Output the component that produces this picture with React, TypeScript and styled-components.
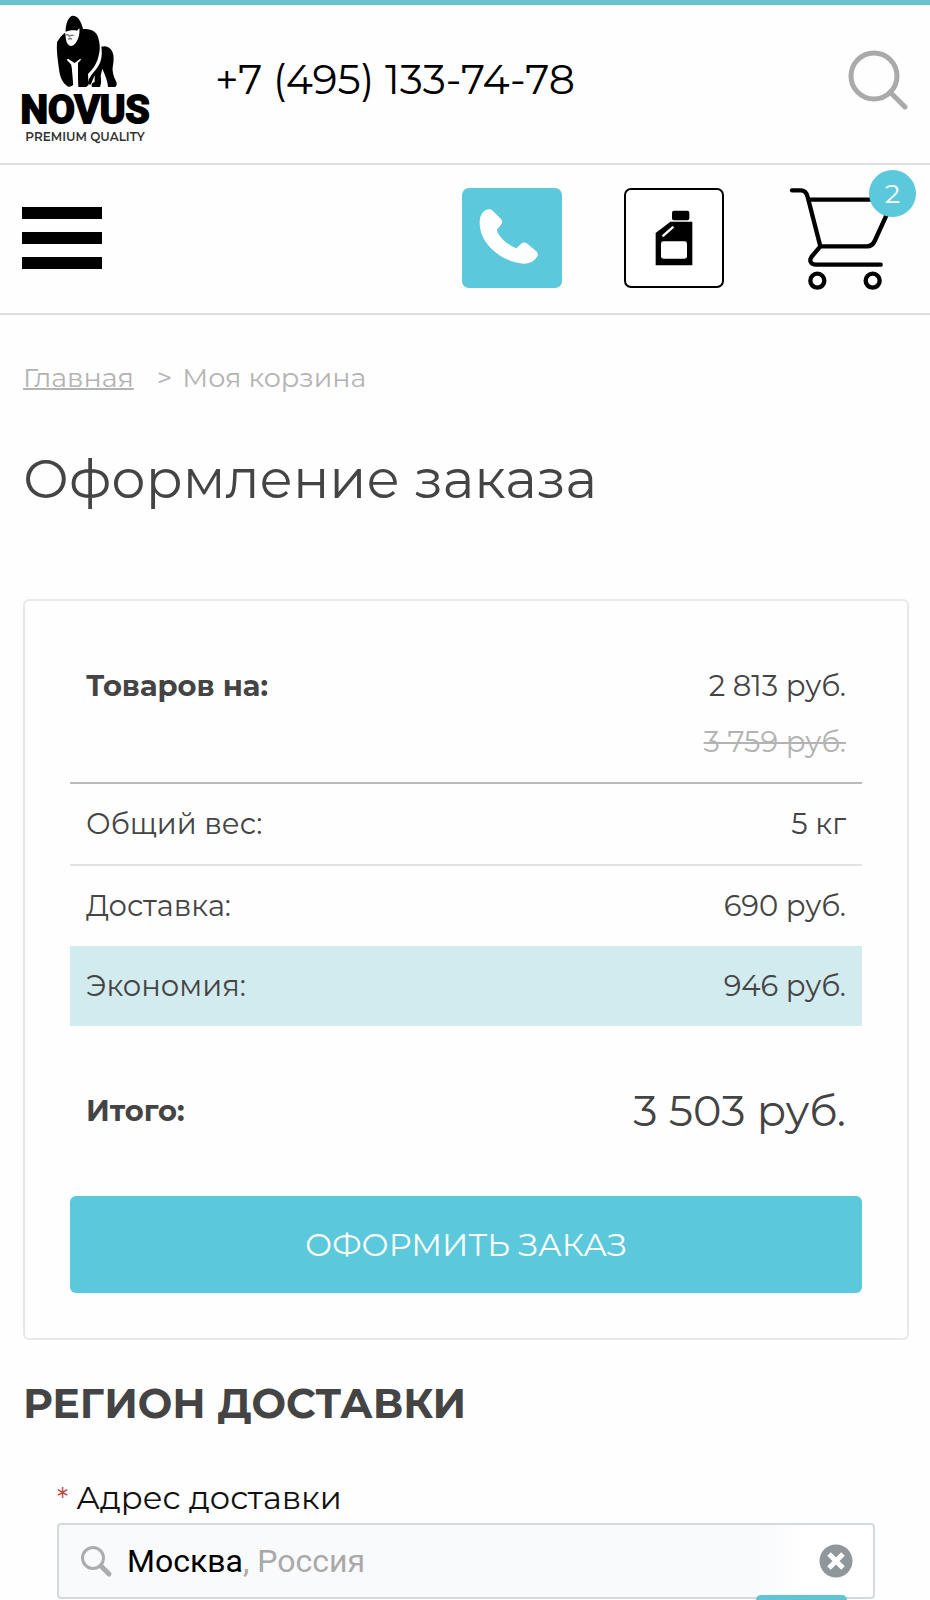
import React, { useState } from "react";
import styled, { createGlobalStyle } from "styled-components";

const teal = "#5bc8db";
const ink = "#444444";
const muted = "#b3b3b3";
const sans = `Montserrat, Inter, "Noto Sans", sans-serif`;

const GlobalStyle = createGlobalStyle`
  *, *::before, *::after { box-sizing: border-box; }
  body { margin: 0; background: #fefefe; color: ${ink}; font-family: ${sans}; }
  button, input { font-family: inherit; }
`;

const Page = styled.div`
  height: 100vh;
  overflow: hidden;
  border-top: 5px solid #68c2d0;
`;

const Bar = styled.div<{ $height: number; $bottom: number }>`
  display: flex;
  align-items: center;
  height: ${(p) => p.$height}px;
  padding: 0 22px ${(p) => p.$bottom}px;
  border-bottom: 2px solid #dddddd;
`;

const Logo = styled.a`
  display: flex;
  flex-direction: column;
  align-items: center;
  width: 126px;
  color: #000;
  text-decoration: none;
  white-space: nowrap;
`;

const LogoName = styled.span`
  font: 700 39px/42px Roboto, sans-serif;
  -webkit-text-stroke: 2px #000;
`;

const LogoTagline = styled.span`
  font: 600 12px/12px ${sans};
  color: #333;
`;

const PhoneLink = styled.a`
  margin-left: 67px;
  font-size: 41px;
  line-height: 48px;
  color: #000;
  text-decoration: none;
  white-space: nowrap;
`;

const IconButton = styled.button`
  display: flex;
  padding: 0;
  border: 0;
  background: none;
  cursor: pointer;
`;

const SearchButton = styled(IconButton)`
  margin-left: auto;
`;

const MenuButton = styled(IconButton)`
  flex-direction: column;
  gap: 13px;
  width: 80px;
  margin-right: auto;
`;

const MenuLine = styled.span`
  height: 12px;
  background: #000;
`;

const Tools = styled.div`
  display: flex;
  align-items: center;
  gap: 62px;
`;

const Tile = styled(IconButton)<{ $filled?: boolean }>`
  align-items: center;
  justify-content: center;
  width: 100px;
  height: 100px;
  border: ${(p) => (p.$filled ? "0" : "2px solid #000")};
  border-radius: 7px;
  background: ${(p) => (p.$filled ? teal : "#fff")};
`;

const CartLink = styled.a`
  position: relative;
  display: flex;
  align-items: flex-start;
  width: 122px;
  height: 110px;
  color: #000;
  text-decoration: none;
`;

const Badge = styled.span`
  position: absolute;
  top: -13px;
  right: -8px;
  width: 47px;
  height: 47px;
  border-radius: 50%;
  background: ${teal};
  color: #fff;
  font-size: 27px;
  line-height: 47px;
  text-align: center;
`;

const Content = styled.main`
  padding: 45px 21px 0 23px;
`;

const Crumbs = styled.nav`
  display: flex;
  gap: 10px;
  font-size: 27px;
  line-height: 36px;
  color: ${muted};
`;

const CrumbLink = styled.a`
  margin-right: 13px;
  color: inherit;
  text-decoration: underline;
  text-decoration-thickness: 2px;
`;

const Title = styled.h1`
  margin: 49px 0 86px;
  font-size: 54px;
  line-height: 68px;
  font-weight: 400;
`;

const Card = styled.section`
  padding: 45px;
  border: 2px solid #e9e9e9;
  border-radius: 6px;
`;

const Summary = styled.table`
  width: 100%;
  border-collapse: collapse;
  font-size: 29px;
  line-height: 56px;
`;

const Row = styled.tr<{ $line?: string; $fill?: string }>`
  border-bottom: ${(p) => (p.$line ? `2px solid ${p.$line}` : "0")};
  background: ${(p) => p.$fill ?? "none"};
`;

const Label = styled.th<{ $bold?: boolean }>`
  padding: 12px 16px;
  font-weight: ${(p) => (p.$bold ? 700 : 400)};
  text-align: left;
  vertical-align: top;
`;

const Value = styled.td`
  padding: 12px 16px;
  text-align: right;
`;

const OldPrice = styled.s`
  display: block;
  color: ${muted};
  text-decoration-thickness: 2px;
`;

const Total = styled.div`
  display: flex;
  align-items: center;
  justify-content: space-between;
  padding: 54px 16px;
  font-size: 29px;
  line-height: 62px;
`;

const TotalSum = styled.span`
  font-size: 43px;
`;

const SubmitButton = styled.button`
  display: block;
  width: 100%;
  height: 97px;
  border: 0;
  border-radius: 6px;
  background: ${teal};
  color: #fff;
  font-size: 32px;
  cursor: pointer;
`;

const Heading = styled.h2`
  margin: 37px 0 0;
  font-size: 41px;
  line-height: 52px;
  font-weight: 700;
`;

const AddressForm = styled.form`
  padding: 45px 34px 0;
`;

const AddressLabel = styled.label`
  display: block;
  font-size: 32px;
  line-height: 48px;
  color: #111;
`;

const Required = styled.span`
  margin-right: 8px;
  color: #b94a48;
  font-size: 29px;
`;

const Field = styled.div`
  display: flex;
  align-items: center;
  height: 76px;
  padding: 0 20px;
  border: 2px solid #d3d9dc;
  border-radius: 4px;
  background: linear-gradient(to right, #f9fafc 86%, #fff 92%);
  font: 400 32px/40px Roboto, sans-serif;
`;

const AddressInput = styled.input`
  field-sizing: content;
  margin-left: 14px;
  padding: 0;
  border: 0;
  outline: 0;
  background: none;
  color: #000;
  font: inherit;
`;

const Region = styled.span`
  flex: 1;
  color: #a9a9a9;
`;

const Actions = styled.div`
  display: flex;
  justify-content: flex-end;
  margin: -4px 28px 0 0;
`;

const ConfirmButton = styled.button`
  position: relative;
  width: 91px;
  height: 64px;
  border: 0;
  border-radius: 5px;
  background: #62c3d2;
`;

const GorillaMark = styled.svg`
  margin-left: 4px;
`;

const Gorilla = () => (
  <GorillaMark width="62" height="74" viewBox="168 46 186 222" aria-hidden="true">
    <path d="M197 88C199 66 207 49 219 48c14 0 24 15 30 40 21 0 36 4 44 21 8 24 8 42 2 62-5 22-16 36-31 52 1 14 1 23 2 32l-7 7h-24c-1-24-1-47-4-69l12-13-2-3-17 13-20-13-4 3 14 15c4 20 7 41 10 55-5 9-12 12-20 11-17-11-24-28-27-52-4-31-8-57-6-81 7-13 16-23 26-30z" />
    <path d="M195 98c10-6 25-7 36-5l7-8c2 19-3 34-11 45-6 8-14 11-20 7-7-5-9-14-10-25z" fill="#fff" />
    <path d="M197 107c5-5 9 0 12 3 4-4 8-5 12-2M204 119c5-4 9-3 12 0" stroke="#777" strokeWidth="4" fill="none" />
    <path d="M214 186l10 10 10-10v74h-14z" fill="#fff" />
    <path d="M304 141c18-6 33 6 36 25 3 21-3 34-2 47 1 15 8 26 12 36 1 8-2 12-6 13h-20c-1-22-11-39-17-55l-5 21c2 14 2 24-2 34h-24c-3-7-1-12 8-15v-20l-12 28-8-3c2-21 15-30 27-47 15-20 16-43 13-64z" />
  </GorillaMark>
);

const rows = [
  { label: "Общий вес:", value: "5 кг", line: "#e3e3e3" },
  { label: "Доставка:", value: "690 руб." },
  { label: "Экономия:", value: "946 руб.", fill: "#d1ebef" },
];

export default function App() {
  const [city, setCity] = useState("Москва");
  return (
    <Page>
      <GlobalStyle />
      <header>
        <Bar $height={160} $bottom={10}>
          <Logo href="#home">
            <Gorilla />
            <LogoName>NOVUS</LogoName>
            <LogoTagline>PREMIUM QUALITY</LogoTagline>
          </Logo>
          <PhoneLink href="tel:+74951337478">+7 (495) 133-74-78</PhoneLink>
          <SearchButton aria-label="Поиск">
            <svg width="62" height="62" viewBox="0 0 62 62" fill="none" stroke="#aaa" strokeWidth="5" strokeLinecap="round">
              <circle cx="28" cy="28" r="23" />
              <path d="M44 44l15 15" />
            </svg>
          </SearchButton>
        </Bar>
        <Bar $height={150} $bottom={2}>
          <MenuButton aria-label="Меню">
            <MenuLine />
            <MenuLine />
            <MenuLine />
          </MenuButton>
          <Tools>
            <Tile $filled aria-label="Позвонить">
              <svg width="100" height="100" viewBox="0 0 300 300" fill="#fff">
                <path d="M53 100C54 78 68 64 82 64c6 0 10 4 14 8l20 20c6 6 6 12 1 18l-13 16c8 23 32 44 59 55l14-13c6-6 13-6 19-1l26 22c8 7 7 13 2 19-9 14-24 20-41 19C116 220 50 166 53 100z" />
              </svg>
            </Tile>
            <Tile aria-label="Подбор масла">
              <svg width="38" height="56" viewBox="0 0 114 168">
                <rect x="51" y="2" width="52" height="29" rx="6" />
                <path d="M46 35h66v131H2V69z" />
                <path d="M25 77l28-25" stroke="#fff" strokeWidth="7" strokeLinecap="round" />
                <rect x="18" y="94" width="78" height="52" rx="7" fill="#fff" />
              </svg>
            </Tile>
            <CartLink href="#cart" aria-label="Корзина">
              <svg width="106" height="108" viewBox="0 0 318 324" fill="none" stroke="#000" strokeWidth="13" strokeLinecap="round" strokeLinejoin="round">
                <path d="M18 22h26c13 0 18 7 21 20l38 148h140c13 0 18-5 23-16l42-92M67 50h230M103 190l-26 31c-9 13-2 24 13 24h194" />
                <circle cx="94" cy="293" r="21" />
                <circle cx="260" cy="293" r="21" />
              </svg>
              <Badge>2</Badge>
            </CartLink>
          </Tools>
        </Bar>
      </header>
      <Content>
        <Crumbs>
          <CrumbLink href="#home">Главная</CrumbLink>
          <span>&gt;</span>
          <span>Моя корзина</span>
        </Crumbs>
        <Title>Оформление заказа</Title>
        <Card>
          <Summary>
            <tbody>
              <Row $line="#bbbbbb">
                <Label $bold scope="row">Товаров на:</Label>
                <Value>
                  2 813 руб.
                  <OldPrice>3 759 руб.</OldPrice>
                </Value>
              </Row>
              {rows.map((r) => (
                <Row key={r.label} $line={r.line} $fill={r.fill}>
                  <Label scope="row">{r.label}</Label>
                  <Value>{r.value}</Value>
                </Row>
              ))}
            </tbody>
          </Summary>
          <Total>
            <strong>Итого:</strong>
            <TotalSum>3 503 руб.</TotalSum>
          </Total>
          <SubmitButton>ОФОРМИТЬ ЗАКАЗ</SubmitButton>
        </Card>
        <Heading>РЕГИОН ДОСТАВКИ</Heading>
        <AddressForm>
          <AddressLabel htmlFor="address">
            <Required>*</Required>
            Адрес доставки
          </AddressLabel>
          <Field>
            <svg width="34" height="34" viewBox="0 0 34 34" fill="none" stroke="#a9adaf" strokeLinecap="round">
              <circle cx="14" cy="14" r="10.5" strokeWidth="3" />
              <path d="M22 22l8 8" strokeWidth="5" />
            </svg>
            <AddressInput id="address" value={city} onChange={(e) => setCity(e.target.value)} />
            <Region>, Россия</Region>
            <IconButton type="button" aria-label="Очистить" onClick={() => setCity("")}>
              <svg width="34" height="34" viewBox="0 0 34 34">
                <circle cx="17" cy="17" r="16.5" fill="#8f979b" />
                <path d="M10 10l14 14M24 10L10 24" stroke="#fff" strokeWidth="5" />
              </svg>
            </IconButton>
          </Field>
          <Actions>
            <ConfirmButton aria-label="Выбрать" />
          </Actions>
        </AddressForm>
      </Content>
    </Page>
  );
}
